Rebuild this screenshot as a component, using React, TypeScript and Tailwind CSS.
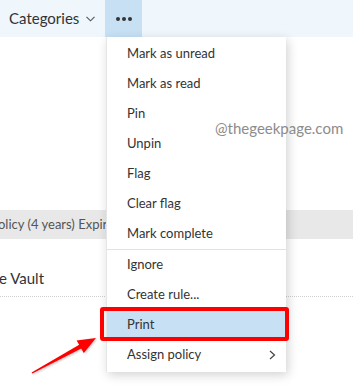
import React from 'react';

const items = [
  'Mark as unread',
  'Mark as read',
  'Pin',
  'Unpin',
  'Flag',
  'Clear flag',
  'Mark complete',
];

const items2 = ['Ignore', 'Create rule...'];

function Item({ label, active }: { label: string; active?: boolean }) {
  return (
    <div className={`h-[30px] flex items-center pl-[20px] pr-[14px] ${active ? 'bg-[#c7e0f4]' : ''}`}>
      <span className="flex-1">{label}</span>
    </div>
  );
}

export default function App() {
  return (
    <div
      className="relative w-[353px] h-[389px] overflow-hidden bg-white text-[#333333]"
      style={{ fontFamily: 'Lato, "Open Sans", sans-serif' }}
    >
      {/* toolbar */}
      <div className="h-[37px] bg-[#eff6fc] flex items-stretch">
        <div className="w-[105px] flex items-center pl-[9px] text-[15px]">
          <span>Categories</span>
          <svg className="ml-[7px]" width="9" height="6" viewBox="0 0 9 6" fill="none">
            <path d="M0.5 0.8 L4.5 4.8 L8.5 0.8" stroke="#555" strokeWidth="1.1" />
          </svg>
        </div>
        <div className="w-[37px] bg-[#c7e0f4] flex items-center justify-center gap-[2px]">
          <span className="w-[4px] h-[4px] rounded-full bg-[#333]" />
          <span className="w-[4px] h-[4px] rounded-full bg-[#333]" />
          <span className="w-[4px] h-[4px] rounded-full bg-[#333]" />
        </div>
      </div>

      {/* message list behind */}
      <div className="pt-[173px]">
        <div className="h-[29px] bg-[#e8e8e8] flex items-center text-[13px] text-[#555] -ml-[2px] whitespace-nowrap">
          olicy (4 years) Expires
        </div>
        <div className="h-[58px] pt-[29px] text-[15px] leading-[20px] -ml-[1px] whitespace-nowrap border-b border-dotted border-[#cfcfcf]">
          e Vault
        </div>
      </div>

      {/* context menu */}
      <div className="absolute left-[106px] top-[37px] w-[180px] bg-white pt-[2px] pb-[2px] text-[13px] shadow-[2px_3px_10px_rgba(0,0,0,0.18)] border-l border-[#e6e6e6]">
        {items.map((t) => (
          <Item key={t} label={t} />
        ))}
        <div className="h-px bg-[#e1e1e1]" />
        {items2.map((t) => (
          <Item key={t} label={t} />
        ))}
        <Item label="Print" active />
        <div className="h-[30px] flex items-center pl-[20px] pr-[10px]">
          <span className="flex-1">Assign policy</span>
          <svg width="7" height="10" viewBox="0 0 7 10" fill="none">
            <path d="M1 1 L5.5 5 L1 9" stroke="#444" strokeWidth="1.2" />
          </svg>
        </div>
      </div>

      {/* watermark */}
      <div className="absolute left-[215px] top-[117px] text-[15px] text-[#8c8c8c] whitespace-nowrap">
        @thegeekpage.com
      </div>

      {/* red highlight box */}
      <div className="absolute left-[100px] top-[307px] w-[189px] h-[34px] border-[4px] border-[#ff0000] rounded-[3px]" />

      {/* arrow */}
      <svg className="absolute left-0 top-0" width="353" height="389" viewBox="0 0 353 389">
        <polygon
          points="32.4,373.6 81.2,348.6 83.8,353 96,338 76.6,340.4 79.2,344.8 31.6,372.4"
          fill="#ff0000"
          style={{ filter: 'drop-shadow(1px 1px 1px rgba(0,0,0,0.25))' }}
        />
      </svg>
    </div>
  );
}
